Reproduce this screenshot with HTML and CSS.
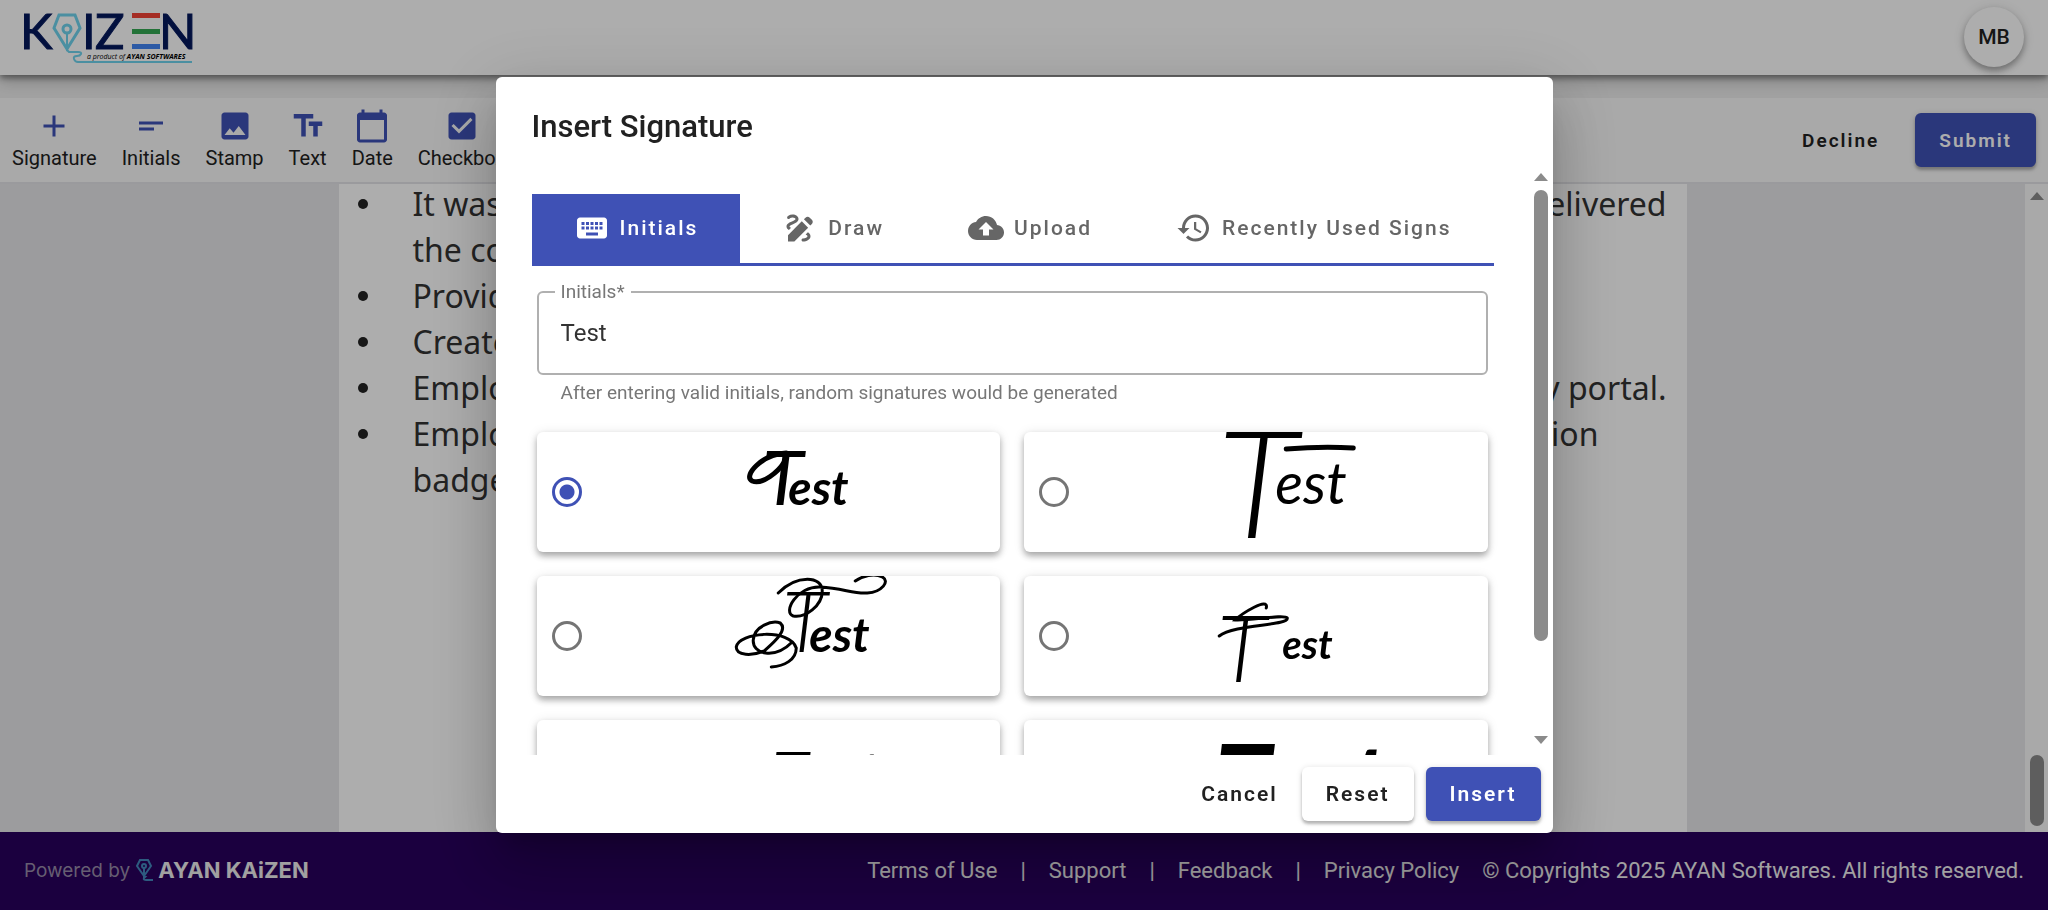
FILE: index.html
```
<!DOCTYPE html>
<html lang="en">
<head>
  <meta charset="UTF-8" />
  <meta name="viewport" content="width=device-width, initial-scale=1.0"/>
  <title>Insert Signature</title>
  <link rel="stylesheet" href="styles.css">
</head>
<body>

  <header class="header">
    <svg class="logo" viewBox="0 0 172 56" role="img" aria-label="Kaizen">
      <g class="logo-letters">
        <text x="-4" y="40">K</text>
        <text x="58" y="40">I</text>
        <text x="71" y="40">Z</text>
        <text x="135" y="40">N</text>
      </g>
      <rect x="108" y="4" width="28" height="5" fill="#f44336"/>
      <rect x="108" y="20" width="28" height="5" fill="#34a853"/>
      <rect x="108" y="35" width="28" height="5" fill="#4285f4"/>
      <g fill="none" stroke="#6fd3ee" stroke-width="3">
        <path d="M35 6h16l5 13-13 21L30 19z"/>
        <circle cx="43" cy="20" r="4"/>
        <path d="M43 24v17l2 2h9q4 0 3 2t-4 2q-4 0-3 3 1 3 4 3h114" stroke-width="2"/>
      </g>
      <text class="logo-tag" x="63" y="50">a product of <tspan font-weight="700">AYAN SOFTWARES</tspan></text>
    </svg>
    <button class="avatar">MB</button>
  </header>

  <div class="toolbar">
    <button class="tool">
      <svg class="icon" viewBox="0 0 24 24"><path d="M19 13h-6v6h-2v-6H5v-2h6V5h2v6h6v2z"/></svg>
      Signature
    </button>
    <button class="tool">
      <svg class="icon" viewBox="0 0 24 24"><path d="M4 9h16v2H4V9zm0 4h10v2H4v-2z"/></svg>
      Initials
    </button>
    <button class="tool">
      <svg class="icon" viewBox="0 0 24 24"><path d="M21 19V5c0-1.100-.9-2-2-2H5c-1.100 0-2 .9-2 2v14c0 1.100.9 2 2 2h14c1.100 0 2-.9 2-2zM8.500 13.500l2.500 3.010L14.500 12l4.500 6H5l3.500-4.500z"/></svg>
      Stamp
    </button>
    <button class="tool">
      <svg class="icon" viewBox="0 0 24 24"><path d="M2.500 4v3h5v12h3V7h5V4h-13zm19 5h-9v3h3v7h3v-7h3V9z"/></svg>
      Text
    </button>
    <button class="tool">
      <svg class="icon" viewBox="0 0 24 24"><path d="M20 3h-1V1h-2v2H7V1H5v2H4c-1.100 0-2 .9-2 2v16c0 1.100.9 2 2 2h16c1.100 0 2-.9 2-2V5c0-1.100-.9-2-2-2zm0 18H4V8h16v13z"/></svg>
      Date
    </button>
    <button class="tool">
      <svg class="icon" viewBox="0 0 24 24"><path d="M19 3H5c-1.110 0-2 .9-2 2v14c0 1.100.89 2 2 2h14c1.110 0 2-.9 2-2V5c0-1.100-.89-2-2-2zm-9 14l-5-5 1.410-1.410L10 14.170l7.590-7.590L19 8l-9 9z"/></svg>
      Checkbox
    </button>
    <div class="toolbar-actions">
      <button class="btn">Decline</button>
      <button class="btn btn-primary">Submit</button>
    </div>
  </div>

  <main class="viewer">
    <div class="viewer-body">
      <div class="page">
        <ul>
          <li>
            <div class="line"><span>It was</span><span>delivered</span></div>
            <div class="line"><span>the company</span></div>
          </li>
          <li><div class="line"><span>Provided</span></div></li>
          <li><div class="line"><span>Created</span></div></li>
          <li><div class="line"><span>Employee</span><span>by portal.</span></div></li>
          <li>
            <div class="line line-short"><span>Employee</span><span>selection</span></div>
            <div class="line"><span>badge</span></div>
          </li>
        </ul>
      </div>
    </div>
    <div class="scrollbar page-scroll">
      <svg class="arrow" viewBox="0 0 14 8"><path d="M7 0l7 8H0z"/></svg>
      <div class="thumb"></div>
    </div>
  </main>

  <footer class="footer">
    <div class="powered">
      <span>Powered by</span>
      <svg class="pen" viewBox="0 0 18 22"><path d="M5 1h8l3 6-7 10L2 7zM9 8v10h1q-3 3 1 3h7"/><circle cx="9" cy="7" r="2"/></svg>
      <strong>AYAN KAiZEN</strong>
    </div>
    <nav class="links">
      <a href="#">Terms of Use</a><span>|</span>
      <a href="#">Support</a><span>|</span>
      <a href="#">Feedback</a><span>|</span>
      <a href="#">Privacy Policy</a>
    </nav>
    <span class="copyright">© Copyrights 2025 AYAN Softwares. All rights reserved.</span>
  </footer>

  <div class="overlay">
    <div class="dialog" role="dialog" aria-labelledby="dialogTitle">
      <h2 id="dialogTitle">Insert Signature</h2>

      <div class="dialog-body">
        <div class="dialog-content">
          <div class="tabs" role="tablist">
            <button class="tab active" role="tab">
              <svg class="icon" viewBox="0 0 24 24"><path d="M20 5H4c-1.100 0-1.990.9-1.990 2L2 17c0 1.100.9 2 2 2h16c1.100 0 2-.9 2-2V7c0-1.100-.9-2-2-2zm-9 3h2v2h-2V8zm0 3h2v2h-2v-2zM8 8h2v2H8V8zm0 3h2v2H8v-2zm-1 2H5v-2h2v2zm0-3H5V8h2v2zm9 7H8v-2h8v2zm0-4h-2v-2h2v2zm0-3h-2V8h2v2zm3 3h-2v-2h2v2zm0-3h-2V8h2v2z"/></svg>
              Initials
            </button>
            <button class="tab" role="tab">
              <svg class="icon" viewBox="0 0 24 24"><path d="M18.850 10.390l1.060-1.060c.78-.78.78-2.050 0-2.830L18.500 5.090c-.78-.78-2.050-.78-2.830 0l-1.060 1.060 4.240 4.240zm-5.660-2.830L4 16.760V21h4.240l9.190-9.190-4.240-4.250zM19 17.500c0 2.190-2.540 3.500-5 3.500-.55 0-1-.45-1-1s.45-1 1-1c1.540 0 3-.73 3-1.500 0-.47-.48-.87-1.230-1.200l1.480-1.480c1.070.63 1.750 1.470 1.750 2.680zM4.580 13.350C3.610 12.790 3 12.060 3 11c0-1.800 1.890-2.630 3.560-3.360C7.590 7.180 9 6.560 9 6c0-.41-.78-1-2-1-1.260 0-1.800.61-1.830.64-.35.41-.98.46-1.400.12-.41-.34-.49-.95-.15-1.380C3.730 4.240 4.760 3 7 3s4 1.320 4 3c0 1.870-1.930 2.720-3.640 3.470C6.420 9.880 5 10.500 5 11c0 .31.43.6 1.070.86l-1.490 1.490z"/></svg>
              Draw
            </button>
            <button class="tab" role="tab">
              <svg class="icon" viewBox="0 0 24 24"><path d="M19.350 10.040C18.670 6.590 15.640 4 12 4 9.110 4 6.600 5.640 5.350 8.040 2.340 8.360 0 10.910 0 14c0 3.310 2.690 6 6 6h13c2.760 0 5-2.240 5-5 0-2.640-2.050-4.780-4.650-4.960zM14 13v4h-4v-4H7l5-5 5 5h-3z"/></svg>
              Upload
            </button>
            <button class="tab" role="tab">
              <svg class="icon" viewBox="0 0 24 24"><path d="M13 3c-4.970 0-9 4.030-9 9H1l3.890 3.890.07.14L9 12H6c0-3.870 3.130-7 7-7s7 3.130 7 7-3.130 7-7 7c-1.930 0-3.680-.79-4.940-2.060l-1.420 1.420C8.270 19.990 10.510 21 13 21c4.970 0 9-4.030 9-9s-4.030-9-9-9zm-1 5v5l4.280 2.540.72-1.210-3.500-2.080V8H12z"/></svg>
              Recently Used Signs
            </button>
          </div>

          <div class="form">
            <fieldset class="field">
              <legend><label for="initials">Initials*</label></legend>
              <input type="text" id="initials" value="Test">
            </fieldset>
            <p class="hint">After entering valid initials, random signatures would be generated</p>

            <div class="signs">
              <label class="sign">
                <input type="radio" name="sign" checked>
                <svg class="ink" viewBox="0 0 200 120">
                  <text x="60" y="73" font-size="75">T<tspan class="bold" x="86" font-size="48">est</tspan></text>
                  <path class="thick" d="M84 21C60 22 40 44 50 49 60 53 76 40 82 30"/>
                </svg>
              </label>
              <label class="sign">
                <input type="radio" name="sign">
                <svg class="ink" viewBox="0 0 200 120">
                  <text class="light" x="28" y="106" font-size="150">T<tspan class="regular" x="86" y="72" font-size="58">est</tspan></text>
                  <path class="thick" d="M97 17q36-3 67-1"/>
                </svg>
              </label>
              <label class="sign">
                <input type="radio" name="sign">
                <svg class="ink" viewBox="0 0 200 120">
                  <text class="light" x="80" y="76" font-size="84">T<tspan class="bold" x="107" font-size="48">est</tspan></text>
                  <path d="M76 17C95-2 120 0 120 15S103 42 91 40C80 36 95 10 118 11S150 18 165 17 188 5 180 1 160 0 153 5"/>
                  <path d="M90 66C72 84 50 78 51 64S70 44 78 47C86 54 72 66 62 75 50 80 34 80 34 71 36 56 88 52 94 72 94 84 82 90 69 91"/>
                </svg>
              </label>
              <label class="sign">
                <input type="radio" name="sign">
                <svg class="ink" viewBox="0 0 200 120">
                  <text class="light" x="28" y="106" font-size="92">T<tspan class="bold" x="93" y="83" font-size="40">est</tspan></text>
                  <path d="M30 60C45 48 100 50 98 42 95 38 60 45 46 44 52 38 80 20 77 32"/>
                </svg>
              </label>
              <label class="sign">
                <input type="radio" name="sign">
                <svg class="ink" viewBox="0 0 200 120">
                  <text x="70" y="79" font-size="66">Test</text>
                </svg>
              </label>
              <label class="sign">
                <input type="radio" name="sign">
                <svg class="ink" viewBox="0 0 200 120">
                  <text class="black" x="26" y="96" font-size="100">Test</text>
                </svg>
              </label>
            </div>
          </div>
        </div>
        <div class="scrollbar">
          <svg class="arrow" viewBox="0 0 14 8"><path d="M7 0l7 8H0z"/></svg>
          <div class="thumb"></div>
          <svg class="arrow" viewBox="0 0 14 8"><path d="M7 8L0 0h14z"/></svg>
        </div>
      </div>

      <div class="dialog-actions">
        <button class="btn btn-text">Cancel</button>
        <button class="btn btn-raised">Reset</button>
        <button class="btn btn-primary">Insert</button>
      </div>
    </div>
  </div>

</body>
</html>
```
FILE: styles.css
```
* { box-sizing: border-box; }

body {
  margin: 0;
  font-family: Roboto, "Liberation Sans", sans-serif;
  color: #212121;
  background: #eee;
  height: 100vh;
  display: flex;
  flex-direction: column;
  overflow: hidden;
}

button {
  font-family: inherit;
  border: none;
  background: none;
  color: inherit;
  padding: 0;
  cursor: pointer;
}

.header {
  height: 75px;
  padding: 0 24px 2px;
  background: #fff;
  display: flex;
  align-items: center;
  justify-content: space-between;
  box-shadow: 0 3px 6px rgba(0, 0, 0, 0.4), 0 6px 15px rgba(0, 0, 0, 0.2);
  position: relative;
  z-index: 1;
}

.logo {
  width: 172px;
  height: 56px;
}

.logo-letters {
  font-family: Lato, sans-serif;
  font-size: 49px;
  fill: #04185c;
  stroke: #04185c;
}

.logo-tag {
  font-family: "Open Sans", sans-serif;
  font-size: 7px;
  font-style: italic;
}

.avatar {
  width: 60px;
  height: 60px;
  border-radius: 50%;
  background: #fff;
  font-size: 21px;
  font-weight: 500;
  box-shadow: 0 4px 6px rgba(0, 0, 0, 0.3), 0 1px 12px rgba(0, 0, 0, 0.12);
}

.toolbar {
  margin-top: 23px;
  height: 86px;
  padding: 0 12px;
  background: #f9f9f9;
  border-bottom: 2px solid #e4e4e8;
  display: flex;
  align-items: center;
  gap: 25px;
}

.tool {
  display: flex;
  flex-direction: column;
  align-items: center;
  font-size: 20px;
  line-height: 28px;
}

.icon {
  width: 36px;
  height: 36px;
  fill: currentColor;
  flex: none;
}

.tool .icon { fill: #3f51b5; }

.toolbar-actions {
  margin-left: auto;
  display: flex;
  gap: 12px;
}

.btn {
  height: 54px;
  padding: 0 24px;
  border-radius: 6px;
  font-size: 21px;
  font-weight: 500;
  letter-spacing: 2px;
}

.toolbar-actions .btn {
  font-size: 19px;
  font-weight: 600;
}

.btn-text { padding: 0 12px; }

.dialog .btn { font-weight: 600; }

.btn-raised,
.btn-primary {
  box-shadow: 0 3px 3px rgba(0, 0, 0, 0.24), 0 1px 6px rgba(0, 0, 0, 0.14);
}

.btn-primary {
  background: #3f51b5;
  color: #fff;
}

.viewer {
  flex: 1;
  min-height: 0;
  display: flex;
}

.viewer-body {
  flex: 1;
  background: #e6e6e9;
  display: flex;
  justify-content: center;
}

.page {
  width: 1348px;
  background: #fff;
  overflow: hidden;
}

.page ul {
  list-style: none;
  margin: -3px 0 0;
  padding: 0 20px 0 74px;
  font-family: "Noto Sans", sans-serif;
  font-size: 32px;
  line-height: 46px;
  color: #333;
}

.page li { position: relative; }

.page li::before {
  content: "";
  position: absolute;
  top: 18px;
  left: -55px;
  width: 10px;
  height: 10px;
  border-radius: 50%;
  background: #222;
}

.line {
  display: flex;
  justify-content: space-between;
}

.line-short { padding-right: 68px; }

.scrollbar {
  width: 23px;
  flex: none;
  display: flex;
  flex-direction: column;
  align-items: center;
}

.arrow {
  width: 14px;
  height: 8px;
  fill: #8b8b8b;
  flex: none;
}

.thumb {
  width: 14px;
  border-radius: 7px;
  background: #8b8b8b;
}

.page-scroll {
  background: #fafafa;
  padding: 8px 0 6px;
  justify-content: space-between;
}

.page-scroll .thumb { height: 71px; }

.footer {
  height: 78px;
  padding: 0 24px 2px;
  background: #28005d;
  color: #eee;
  display: flex;
  align-items: center;
  font-size: 22px;
}

.powered {
  display: flex;
  align-items: center;
  gap: 5px;
  font-family: Inter, sans-serif;
  font-size: 19px;
  color: #978ba8;
  margin-right: auto;
}

.powered strong {
  font-size: 22px;
  color: #eee;
}

.pen {
  width: 18px;
  height: 22px;
  fill: none;
  stroke: #4387bd;
  stroke-width: 2;
}

.links {
  display: flex;
  gap: 23px;
  margin-right: 23px;
}

.links a {
  color: inherit;
  text-decoration: none;
}

.overlay {
  position: fixed;
  inset: 0;
  background: rgba(0, 0, 0, 0.32);
  display: flex;
  justify-content: center;
  align-items: center;
  z-index: 1000;
}

.dialog {
  width: 1057px;
  max-width: 80vw;
  background: #fff;
  border-radius: 6px;
  box-shadow: 0 16px 22px -10px rgba(0, 0, 0, 0.2), 0 36px 57px 4px rgba(0, 0, 0, 0.14), 0 14px 69px 12px rgba(0, 0, 0, 0.12);
}

.dialog h2 {
  margin: 0;
  padding: 30px 36px 17px;
  font-size: 31px;
  line-height: 40px;
  font-weight: 500;
}

.dialog-body {
  height: 65vh;
  display: flex;
}

.dialog-content {
  flex: 1;
  padding: 30px 36px 0;
  overflow: hidden;
}

.dialog-body .scrollbar {
  padding: 9px 0 11px;
}

.dialog-body .thumb {
  height: 79%;
  margin: 9px 0 auto;
}

.tabs {
  display: flex;
  border-bottom: 3px solid #3f51b5;
}

.tab {
  flex: 1 1 auto;
  height: 69px;
  display: flex;
  align-items: center;
  justify-content: center;
  gap: 10px;
  font-size: 21px;
  font-weight: 500;
  letter-spacing: 2px;
  color: #666;
}

.tab.active {
  background: #3f51b5;
  color: #fff;
}

.form { padding: 15px 6px 24px 5px; }

.field {
  height: 94px;
  margin: 0;
  padding: 0 22px;
  border: 2px solid #b0b0b0;
  border-radius: 6px;
}

.field legend {
  margin-left: -6px;
  padding: 0 6px;
  font-size: 19px;
  line-height: 22px;
  color: #777;
}

.field input {
  width: 100%;
  height: 60px;
  padding: 0;
  border: none;
  outline: none;
  font-family: inherit;
  font-size: 24px;
  color: #333;
}

.hint {
  margin: 6px 24px 27px;
  font-size: 19px;
  line-height: 24px;
  color: #777;
}

.signs {
  display: grid;
  grid-template-columns: 1fr 1fr;
  gap: 24px;
}

.sign {
  height: 120px;
  padding-left: 15px;
  border-radius: 6px;
  display: flex;
  align-items: center;
  gap: 22px;
  box-shadow: 0 4px 6px rgba(0, 0, 0, 0.3), 0 1px 12px rgba(0, 0, 0, 0.1);
}

.sign input {
  appearance: none;
  width: 30px;
  height: 30px;
  margin: 0;
  border: 3px solid #757575;
  border-radius: 50%;
  flex: none;
}

.sign input:checked {
  border-color: #3f51b5;
  background: radial-gradient(circle, #3f51b5 7px, transparent 8px);
}

.ink {
  flex: 1;
  min-width: 0;
  height: 120px;
  font-family: Lato, sans-serif;
  font-style: italic;
}

.ink .light { font-weight: 300; }

.ink .regular { font-weight: 400; }

.ink .bold { font-weight: 700; }

.ink .black { font-weight: 900; }

.ink path {
  fill: none;
  stroke: #000;
  stroke-width: 3px;
  stroke-linecap: round;
}

.ink .thick { stroke-width: 5px; }

.dialog-actions {
  padding: 12px;
  display: flex;
  justify-content: flex-end;
  gap: 12px;
}
```
